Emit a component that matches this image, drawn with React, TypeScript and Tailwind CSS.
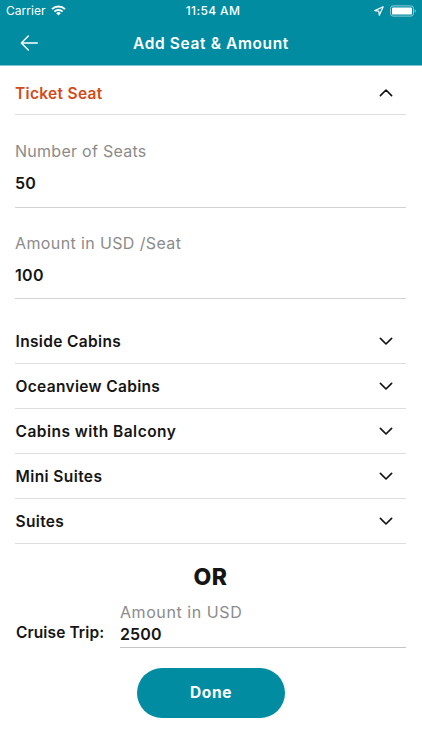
import React from "react";

function Chevron({ up = false }: { up?: boolean }) {
  return (
    <svg className="mr-[13px] h-2 w-[14px] shrink-0" viewBox="0 0 14 8" fill="none" stroke="#111" strokeWidth="1.6" strokeLinecap="round" strokeLinejoin="round">
      <path d={up ? "M1.4 6.6 7 1l5.6 5.6" : "M1.4 1.4 7 7l5.6-5.6"} />
    </svg>
  );
}

function StatusBar() {
  return (
    <div className="flex h-[22px] items-center px-[6px] font-['Inter',sans-serif] text-white">
      <div className="flex flex-1 items-center gap-[5px]">
        <span className="text-[12px] leading-[22px] tracking-[0.05px]">Carrier</span>
        <svg className="-mt-[2px] h-[11px] w-[15px]" viewBox="0 0 15 11" fill="none" stroke="white" strokeWidth="2">
          <path d="M1 4.1a9.3 9.3 0 0 1 13 0M3.4 6.6a5.8 5.8 0 0 1 8.2 0" />
          <path d="M7.5 10.6 5.2 8.2a3.3 3.3 0 0 1 4.6 0Z" fill="white" stroke="none" />
        </svg>
      </div>
      <span className="pl-1 text-[12px] font-medium leading-[22px] tracking-[0.38px]">11:54 AM</span>
      <div className="flex flex-1 items-center justify-end gap-[6px]">
        <svg className="-mt-px h-[10px] w-[10px]" viewBox="0 0 10 10" fill="none" stroke="white" strokeWidth="1.2" strokeLinejoin="round">
          <path d="M9.2.8.8 4.6l4 .6.5 4Z" />
        </svg>
        <svg className="-mr-[1px] -mt-px h-[12px] w-[27px]" viewBox="0 0 27 12">
          <rect x=".5" y=".9" width="23" height="10.2" rx="2.5" fill="none" stroke="#8bcbd6" />
          <rect x="2" y="2.4" width="20" height="7.2" rx="1.2" fill="white" />
          <path d="M24.7 4.2c1.5.6 1.5 2.9 0 3.5Z" fill="#8bcbd6" />
        </svg>
      </div>
    </div>
  );
}

function Field({ label, value, labelClass, valueClass, className }: { label: string; value: string; labelClass: string; valueClass: string; className: string }) {
  return (
    <div className={`flex flex-col border-b border-[#d2d2d2] ${className}`}>
      <span className={`h-8 text-[16px] leading-8 text-[#8b8b8b] ${labelClass}`}>{label}</span>
      <span className={`h-8 text-[16px] font-semibold leading-8 ${valueClass}`}>{value}</span>
    </div>
  );
}

const sections = [
  { name: "Inside Cabins", tracking: "tracking-[0.35px]" },
  { name: "Oceanview Cabins", tracking: "tracking-[0.33px]" },
  { name: "Cabins with Balcony", tracking: "tracking-[0.47px]" },
  { name: "Mini Suites", tracking: "tracking-[0.4px]" },
  { name: "Suites", tracking: "tracking-[0.35px]" },
];

export default function App() {
  return (
    <div className="flex h-[750px] w-[422px] flex-col overflow-hidden bg-white font-['Inter',sans-serif] text-[#151515]">
      <header className="h-[66px] border-b border-[#7fc5d0] bg-[#018ca2] text-white">
        <StatusBar />
        <div className="flex h-[43px] items-center px-5">
          <svg className="-mt-[2px] h-4 w-[19px]" viewBox="0 0 19 16" fill="none" stroke="white" strokeWidth="1.4" strokeLinecap="round" strokeLinejoin="round">
            <path d="M17.3 8H1.3M8.3 1 1.3 8l7 7" />
          </svg>
          <h1 className="flex-1 pr-[19px] text-center text-[15.5px] font-semibold tracking-[0.62px]">Add Seat &amp; Amount</h1>
        </div>
      </header>
      <main className="flex flex-1 flex-col pr-4 pl-[15px]">
        <div className="flex h-[49px] items-center justify-between border-b border-[#dedede] pt-[5px]">
          <span className="pt-[2px] text-[15.5px] font-semibold tracking-[0.32px] text-[#d34a17]">Ticket Seat</span>
          <Chevron up />
        </div>
        <Field label="Number of Seats" value="50" labelClass="tracking-[0.27px]" valueClass="tracking-[0.1px]" className="h-[93px] pt-5" />
        <Field label="Amount in USD /Seat" value="100" labelClass="tracking-[0.38px]" valueClass="tracking-[0.3px]" className="h-[91px] pt-[19px]" />
        <div className="mt-5">
          {sections.map((s) => (
            <div key={s.name} className="flex h-[45px] items-center justify-between border-b border-[#dedede]">
              <span className={`pt-[2px] pl-[0.5px] text-[15.5px] font-semibold ${s.tracking}`}>{s.name}</span>
              <Chevron />
            </div>
          ))}
        </div>
        <div className="mt-[17px] h-8 text-center text-[23px] font-extrabold leading-8 tracking-[0.4px]">OR</div>
        <div className="mt-2 flex h-[47px] pl-[1px]">
          <span className="w-[104px] pt-5 text-[15.5px] font-semibold leading-6 tracking-[0.1px]">Cruise Trip:</span>
          <div className="flex flex-1 flex-col border-b border-[#c6c6c6]">
            <span className="text-[16px] leading-[22px] tracking-[0.57px] text-[#8b8b8b]">Amount in USD</span>
            <span className="text-[16px] font-semibold leading-[22px] tracking-[0.15px]">2500</span>
          </div>
        </div>
        <button className="mt-5 ml-[122px] h-[50px] w-[148px] rounded-full bg-[#018ca2] text-[15.5px] font-bold tracking-[0.6px] text-white">Done</button>
      </main>
    </div>
  );
}
